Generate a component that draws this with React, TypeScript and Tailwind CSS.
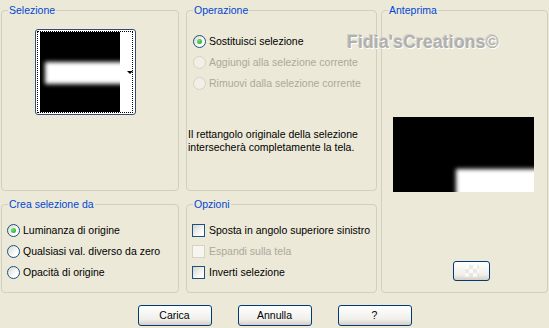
import type { ReactNode } from "react";

function GroupBox({ label, className, children }: { label: string; className: string; children?: ReactNode }) {
  return (
    <div className={`relative border border-[#D0D0BF] rounded-[4px] ${className}`}>
      <span className="absolute left-[6px] -top-[7px] px-[1px] bg-[#ECE9D8] text-[#0046D5] leading-[13px]">
        {label}
      </span>
      {children}
    </div>
  );
}

function Radio({ label, checked, disabled }: { label: string; checked?: boolean; disabled?: boolean }) {
  return (
    <div className="h-[21px] flex items-center gap-[3px]">
      <span
        className={
          disabled
            ? "w-[13px] h-[13px] rounded-full border border-[#D6D3C4] bg-[#F1EFE6]"
            : "w-[13px] h-[13px] rounded-full border border-[#1C5180] bg-[linear-gradient(135deg,#d8d7cf,#ffffff_70%)] flex items-center justify-center"
        }
      >
        {checked && <span className="w-[5px] h-[5px] rounded-full bg-[radial-gradient(circle_at_35%_35%,#6ee26e,#21A121)]" />}
      </span>
      <span className={disabled ? "text-[#ACA899]" : "text-black"}>{label}</span>
    </div>
  );
}

function Check({ label, disabled }: { label: string; disabled?: boolean }) {
  return (
    <div className="h-[21px] flex items-center gap-[4px]">
      <span
        className={
          disabled
            ? "w-[13px] h-[13px] border border-[#D6D3C4] bg-[#F6F5F0]"
            : "w-[13px] h-[13px] border border-[#1C5180] bg-[linear-gradient(135deg,#d6d5cd,#ffffff_80%)]"
        }
      />
      <span className={disabled ? "text-[#ACA899]" : "text-black"}>{label}</span>
    </div>
  );
}

function XpButton({ children }: { children?: ReactNode }) {
  return (
    <button className="w-[74px] h-[21px] border border-[#003C74] rounded-[3px] bg-[linear-gradient(#ffffff,#f0efea_70%,#d6d0c5)] text-black leading-none flex items-center justify-center">
      {children}
    </button>
  );
}

export default function App() {
  return (
    <div className="relative w-[549px] h-[328px] bg-[#ECE9D8] font-['Liberation_Sans',Arial,sans-serif] text-[10.5px] overflow-hidden">
      <div className="flex pt-[10px] pl-[1px]">
        {/* left column */}
        <div className="flex flex-col w-[178px]">
          <GroupBox label="Selezione" className="h-[181px]">
            <div className="ml-[33px] mt-[18px] w-[101px] h-[86px] border border-[#2E4E74] rounded-[3px] bg-white p-[1px] pr-[2px]">
              <div className="h-full border border-dotted border-black flex pl-[2px]">
                <div className="relative w-[80px] h-[80px] bg-black overflow-hidden">
                  <div className="absolute left-[5px] top-[30px] w-[90px] h-[22px] bg-white blur-[2px]" />
                </div>
                <div className="flex-1 flex items-center justify-end -mr-[1px]">
                  <span className="w-0 h-0 border-l-[3px] border-r-[3px] border-t-[3px] border-l-transparent border-r-transparent border-t-black" />
                </div>
              </div>
            </div>
          </GroupBox>
          <GroupBox label="Crea selezione da" className="mt-[13px] h-[89px]">
            <div className="pt-[15px] pl-[5px]">
              <Radio label="Luminanza di origine" checked />
              <Radio label="Qualsiasi val. diverso da zero" />
              <Radio label="Opacità di origine" />
            </div>
          </GroupBox>
        </div>

        {/* middle column */}
        <div className="flex flex-col w-[191px] ml-[7px]">
          <GroupBox label="Operazione" className="h-[181px]">
            <div className="pt-[20px]">
              <div className="pl-[6px]">
                <Radio label="Sostituisci selezione" checked />
                <Radio label="Aggiungi alla selezione corrente" disabled />
                <Radio label="Rimuovi dalla selezione corrente" disabled />
              </div>
              <p className="pl-[1px] mt-[34px] leading-[13px] text-black">
                Il rettangolo originale della selezione
                <br />
                intersecherà completamente la tela.
              </p>
            </div>
          </GroupBox>
          <GroupBox label="Opzioni" className="mt-[13px] h-[89px]">
            <div className="pt-[15px] pl-[5px]">
              <Check label="Sposta in angolo superiore sinistro" />
              <Check label="Espandi sulla tela" disabled />
              <Check label="Inverti selezione" />
            </div>
          </GroupBox>
        </div>

        {/* right column */}
        <GroupBox label="Anteprima" className="ml-[4px] w-[167px] h-[283px]">
          <div className="pt-[106px] pl-[11px]">
            <div className="relative w-[141px] h-[75px] bg-black overflow-hidden">
              <div className="absolute left-[63px] top-[52px] w-[100px] h-[40px] bg-white blur-[2px]" />
            </div>
            <button className="mt-[69px] ml-[60px] w-[37px] h-[20px] border border-[#003C74] rounded-[3px] bg-[linear-gradient(#ffffff,#f0efea_70%,#d6d0c5)] flex items-center justify-center">
              <span className="w-[14px] h-[12px] opacity-60 bg-[repeating-conic-gradient(#e2e2dc_0_25%,#ffffff_0_50%)] bg-[length:8px_8px]" />
            </button>
          </div>
        </GroupBox>
      </div>

      <div className="flex justify-center gap-[26px] mt-[12px]">
        <XpButton>Carica</XpButton>
        <XpButton>Annulla</XpButton>
        <XpButton>?</XpButton>
      </div>

      {/* watermark */}
      <div className="absolute left-[347px] top-[29px] font-bold text-[17.5px] tracking-[0.2px] text-[#B0B0AE] [text-shadow:1px_1px_0_#ffffff,-1px_-1px_0_#d2d0c6] pointer-events-none">
        Fidia&apos;sCreations©
      </div>
    </div>
  );
}
